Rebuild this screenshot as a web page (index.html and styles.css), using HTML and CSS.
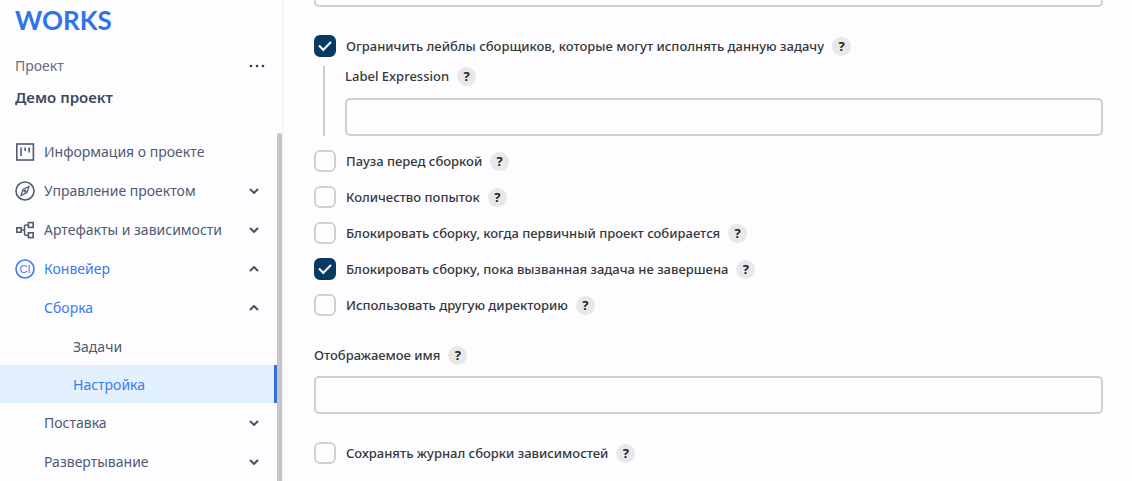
FILE: index.html
```
<!DOCTYPE html>
<html lang="ru">
<head>
  <meta charset="UTF-8">
  <title>Демо проект - Настройка</title>
  <link rel="stylesheet" href="styles.css">
</head>
<body>
  <div class="layout">
    <!-- Боковое меню -->
    <aside class="sidebar">
      <div class="sidebar-header">
        <a class="logo" href="#">WORKS</a>
        <div class="project-row">
          <span class="project-label">Проект</span>
          <button class="more" type="button" aria-label="Ещё">
            <svg width="18" height="4" viewBox="0 0 18 4" fill="currentColor">
              <circle cx="3" cy="2" r="1.3"/><circle cx="9" cy="2" r="1.3"/><circle cx="15" cy="2" r="1.3"/>
            </svg>
          </button>
        </div>
        <div class="project-name">Демо проект</div>
      </div>

      <div class="menu-wrap">
        <nav class="menu">
          <a class="item" href="#">
            <svg class="icon" viewBox="0 0 20 20">
              <rect x="1.8" y="2" width="16.6" height="16"/>
              <path d="M6 5.5v8.5M10.2 5.5v3.5M14.2 5.5v5"/>
            </svg>
            <span>Информация о проекте</span>
          </a>
          <a class="item" href="#">
            <svg class="icon" viewBox="0 0 20 20">
              <circle cx="10" cy="10" r="9"/>
              <path class="thin" d="M14 5.5L12 11.5L6 14.5L8 8.5Z"/>
              <circle class="thin" cx="10" cy="10" r="1"/>
            </svg>
            <span>Управление проектом</span>
            <svg class="chevron" viewBox="0 0 10 6"><path d="M1 1l4 4 4-4"/></svg>
          </a>
          <a class="item" href="#">
            <svg class="icon" viewBox="0 0 20 20">
              <rect x="1.8" y="7.8" width="4.4" height="4.4"/>
              <rect x="13.4" y="2.6" width="4.8" height="4.8"/>
              <rect x="13.4" y="12.8" width="4.8" height="4.8"/>
              <path d="M6.2 10H9.5M13.4 5H11Q9.5 5 9.5 6.5V13.7Q9.5 15.2 11 15.2H13.4"/>
            </svg>
            <span>Артефакты и зависимости</span>
            <svg class="chevron" viewBox="0 0 10 6"><path d="M1 1l4 4 4-4"/></svg>
          </a>
          <a class="item current" href="#">
            <svg class="icon" viewBox="0 0 20 20">
              <circle cx="10" cy="10" r="9"/>
              <text class="icon-text" x="10" y="14" text-anchor="middle">CI</text>
            </svg>
            <span>Конвейер</span>
            <svg class="chevron" viewBox="0 0 10 6"><path d="M1 5l4-4 4 4"/></svg>
          </a>
          <a class="item sub current" href="#">
            <span>Сборка</span>
            <svg class="chevron" viewBox="0 0 10 6"><path d="M1 5l4-4 4 4"/></svg>
          </a>
          <a class="item leaf" href="#"><span>Задачи</span></a>
          <a class="item leaf current active" href="#"><span>Настройка</span></a>
          <a class="item sub" href="#">
            <span>Поставка</span>
            <svg class="chevron" viewBox="0 0 10 6"><path d="M1 1l4 4 4-4"/></svg>
          </a>
          <a class="item sub" href="#">
            <span>Развертывание</span>
            <svg class="chevron" viewBox="0 0 10 6"><path d="M1 1l4 4 4-4"/></svg>
          </a>
        </nav>
        <div class="scrollbar"></div>
      </div>
    </aside>

    <!-- Форма настройки -->
    <main class="content">
      <form class="form">
        <input class="field scrolled" type="text" aria-label="Описание">

        <div class="check-row first">
          <input type="checkbox" id="labels" checked>
          <label for="labels">Ограничить лейблы сборщиков, которые могут исполнять данную задачу</label>
          <button class="help" type="button">?</button>
        </div>
        <div class="nested">
          <div class="label-row">
            <label for="expression">Label Expression</label>
            <button class="help" type="button">?</button>
          </div>
          <input class="field" type="text" id="expression">
        </div>
        <div class="check-row">
          <input type="checkbox" id="pause">
          <label for="pause">Пауза перед сборкой</label>
          <button class="help" type="button">?</button>
        </div>
        <div class="check-row">
          <input type="checkbox" id="retries">
          <label for="retries">Количество попыток</label>
          <button class="help" type="button">?</button>
        </div>
        <div class="check-row">
          <input type="checkbox" id="upstream">
          <label for="upstream">Блокировать сборку, когда первичный проект собирается</label>
          <button class="help" type="button">?</button>
        </div>
        <div class="check-row">
          <input type="checkbox" id="downstream" checked>
          <label for="downstream">Блокировать сборку, пока вызванная задача не завершена</label>
          <button class="help" type="button">?</button>
        </div>
        <div class="check-row">
          <input type="checkbox" id="directory">
          <label for="directory">Использовать другую директорию</label>
          <button class="help" type="button">?</button>
        </div>

        <div class="group">
          <div class="label-row">
            <label for="display-name">Отображаемое имя</label>
            <button class="help" type="button">?</button>
          </div>
          <input class="field" type="text" id="display-name">
        </div>

        <div class="check-row">
          <input type="checkbox" id="log">
          <label for="log">Сохранять журнал сборки зависимостей</label>
          <button class="help" type="button">?</button>
        </div>
      </form>
    </main>
  </div>
</body>
</html>
```
FILE: styles.css
```
* {
  box-sizing: border-box;
}
body {
  margin: 0;
  font-family: "Noto Sans", sans-serif;
  background-color: #fdfdff;
  color: #36373b;
}
button {
  padding: 0;
  border: none;
  font-family: inherit;
  cursor: pointer;
}
.layout {
  display: flex;
  height: 100vh;
  overflow: hidden;
}

/* Боковое меню */
.sidebar {
  display: flex;
  flex-direction: column;
  flex: none;
  width: 283px;
  border-right: 1px solid #f0f0f4;
  color: #505b70;
}
.sidebar-header {
  height: 132px;
  padding: 5px 16px 0 15px;
}
.logo {
  display: block;
  font-family: Lato, sans-serif;
  font-size: 26px;
  font-weight: 700;
  line-height: 30px;
  color: #2f74e8;
  text-decoration: none;
}
.project-row {
  display: flex;
  align-items: center;
  justify-content: space-between;
  margin-top: 21px;
  font-size: 14px;
  line-height: 20px;
  color: #666c78;
}
.more {
  display: flex;
  background: none;
  color: #343b48;
}
.project-name {
  margin-top: 11px;
  font-size: 15px;
  font-weight: 600;
  line-height: 20px;
  color: #3d485b;
}
.menu-wrap {
  display: flex;
  flex: 1;
  min-height: 0;
}
.menu {
  flex: 1;
}
.scrollbar {
  width: 5px;
  margin-top: 1px;
  border-radius: 3px 3px 0 0;
  background-color: #c6c6c8;
}
.item {
  display: flex;
  align-items: center;
  height: 39px;
  padding: 0 18px 0 15px;
  font-size: 14px;
  color: inherit;
  text-decoration: none;
}
.item.sub {
  padding-left: 44px;
}
.item.leaf {
  height: 38px;
  padding-left: 73px;
}
.item.current {
  color: #3b7bef;
}
.item.active {
  background-color: #e3f0fe;
  border-right: 3px solid #3b6fd8;
}
.icon {
  width: 20px;
  height: 20px;
  margin-right: 9px;
  fill: none;
  stroke: currentColor;
  stroke-width: 1.6;
}
.icon .thin {
  stroke-width: 1.2;
}
.icon-text {
  font-family: "Liberation Sans", Arial, sans-serif;
  font-size: 11px;
  fill: currentColor;
  stroke: none;
}
.chevron {
  width: 10px;
  height: 6px;
  margin-left: auto;
  fill: none;
  stroke: #47536a;
  stroke-width: 2;
}

/* Форма */
.content {
  flex: 1;
  min-width: 0;
  padding: 0 29px 0 31px;
}
.form {
  font-size: 13px;
  font-weight: 500;
  line-height: 20px;
}
.field {
  display: block;
  width: 100%;
  height: 38px;
  padding: 0 10px;
  border: 2px solid #d0d0d3;
  border-radius: 5px;
  background-color: #fefeff;
  font: inherit;
}
.field.scrolled {
  margin-top: -31px;
}
.check-row {
  display: flex;
  align-items: center;
  height: 36px;
}
.check-row.first {
  margin-top: 21px;
}
.check-row label {
  margin-left: 10px;
}
input[type="checkbox"] {
  appearance: none;
  display: grid;
  place-items: center;
  flex: none;
  width: 22px;
  height: 22px;
  margin: 0;
  border: 2px solid #cfd1d6;
  border-radius: 6px;
  background-color: #fefeff;
}
input[type="checkbox"]:checked {
  border-color: #063a63;
  background-color: #063a63;
}
input[type="checkbox"]:checked::before {
  content: "";
  width: 10px;
  height: 5px;
  margin-bottom: 3px;
  border: solid #fff;
  border-width: 0 0 2px 2px;
  transform: rotate(-45deg);
}
.help {
  width: 19px;
  height: 19px;
  margin-left: 8px;
  border-radius: 50%;
  background-color: #e8e8ea;
  color: #222;
  font-size: 13px;
  font-weight: 700;
  line-height: 19px;
}
.label-row {
  display: flex;
  align-items: center;
  height: 20px;
}
.nested {
  margin: 2px 0 7px 9px;
  padding-left: 20px;
  border-left: 2px solid #cbcbd0;
}
.nested .field {
  margin-top: 12px;
}
.group {
  margin: 22px 0 21px;
}
.group .field {
  margin-top: 11px;
}
```
